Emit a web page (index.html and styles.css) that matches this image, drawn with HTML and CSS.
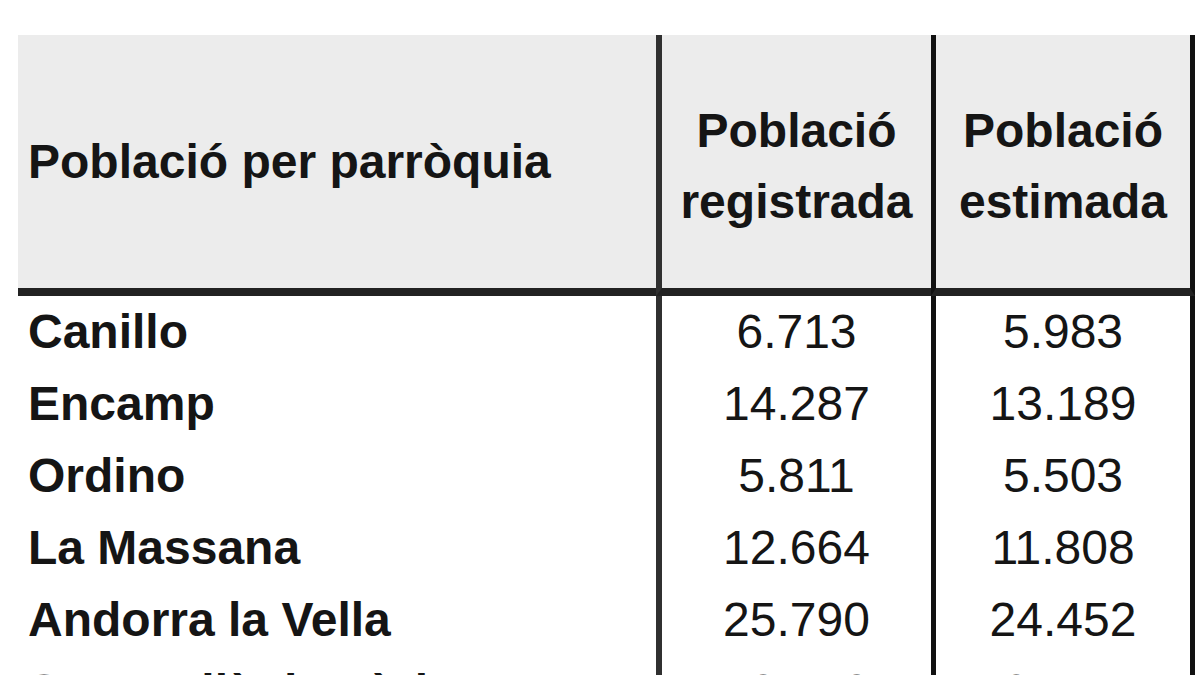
FILE: index.html
```html
<!DOCTYPE html>
<html lang="ca">
<head>
<meta charset="utf-8">
<title>Població per parròquia</title>
<link rel="stylesheet" href="styles.css">
</head>
<body>
<div class="page">
  <table class="pop">
    <colgroup>
      <col class="c-name">
      <col class="c-reg">
      <col class="c-est">
    </colgroup>
    <thead>
      <tr>
        <th class="h-name">Població per parròquia</th>
        <th class="h-num h-reg">Població<br>registrada</th>
        <th class="h-num h-est">Població<br>estimada</th>
      </tr>
    </thead>
    <tbody>
      <tr><td class="name">Canillo</td><td class="num reg">6.713</td><td class="num est">5.983</td></tr>
      <tr><td class="name">Encamp</td><td class="num reg">14.287</td><td class="num est">13.189</td></tr>
      <tr><td class="name">Ordino</td><td class="num reg">5.811</td><td class="num est">5.503</td></tr>
      <tr><td class="name">La Massana</td><td class="num reg">12.664</td><td class="num est">11.808</td></tr>
      <tr><td class="name">Andorra la Vella</td><td class="num reg">25.790</td><td class="num est">24.452</td></tr>
      <tr><td class="name">Sant Julià de Lòria</td><td class="num reg">10.140</td><td class="num est">9.447</td></tr>
      <tr><td class="name">Escaldes-Engordany</td><td class="num reg">16.545</td><td class="num est">15.320</td></tr>
    </tbody>
  </table>
</div>
</body>
</html>
```

FILE: styles.css
```css
html, body {
  margin: 0;
  padding: 0;
  background: #ffffff;
  overflow: hidden;
}

.page {
  padding: 35px 0 0 18px;
  font-family: "Liberation Sans", Arial, "DejaVu Sans", sans-serif;
  color: #151515;
}

.pop {
  border-collapse: separate;
  border-spacing: 0;
  table-layout: fixed;
  width: 1177px;
  font-size: 48px;
}

.c-name { width: 638px; }
.c-reg { width: 275px; }
.c-est { width: 264px; }

.pop th {
  background: #ececec;
  height: 261px;
  padding: 0;
  font-weight: bold;
  vertical-align: middle;
  border-bottom: 8px solid #222222;
  box-sizing: border-box;
}

.pop .h-name {
  text-align: left;
  padding-left: 10px;
  line-height: 72px;
}

.pop .h-num {
  text-align: center;
  line-height: 71px;
  padding-top: 8px;
  white-space: nowrap;
}

.pop td {
  height: 72px;
  padding: 0;
  line-height: 72px;
  white-space: nowrap;
}

.name {
  font-weight: bold;
  padding-left: 10px !important;
  text-align: left;
}

.num {
  text-align: center;
  font-weight: normal;
}

.h-reg, .reg {
  border-left: 6px solid #303030;
}

.h-est, .est {
  border-left: 5px solid #111111;
  border-right: 5px solid #111111;
}
```
